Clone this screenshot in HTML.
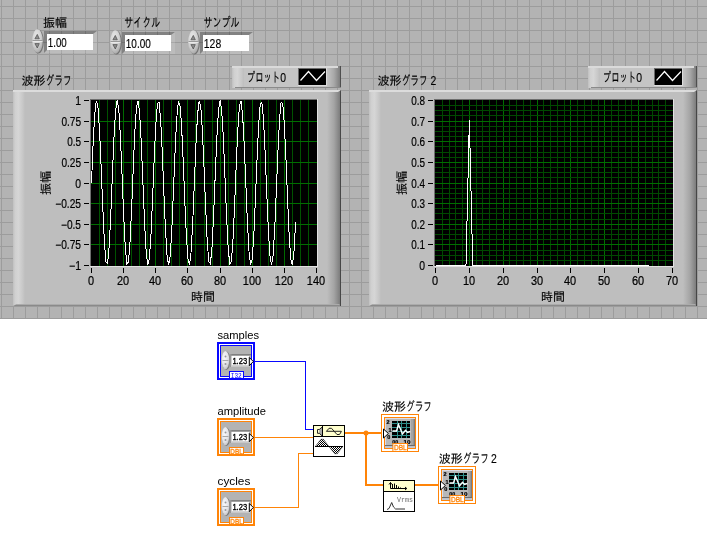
<!DOCTYPE html>
<html lang="ja"><head><meta charset="utf-8"><title>LabVIEW</title>
<style>html,body{margin:0;padding:0;background:#fff;overflow:hidden}svg{display:block;will-change:transform}</style></head>
<body>
<svg width="707" height="534" viewBox="0 0 707 534" font-family="'Liberation Sans','IPAGothic',sans-serif">
<defs>
<pattern id="grid" width="12" height="12" patternUnits="userSpaceOnUse">
<rect width="12" height="12" fill="#b3b3b3"/>
<rect x="1" y="0" width="1" height="12" fill="#9c9c9c"/>
<rect x="0" y="6" width="12" height="1" fill="#9c9c9c"/>
</pattern>
<linearGradient id="frL" x1="0" x2="1" y1="0" y2="0">
<stop offset="0" stop-color="#c0c0c0"/><stop offset="0.18" stop-color="#d0d0d0"/><stop offset="0.45" stop-color="#d6d6d6"/><stop offset="0.8" stop-color="#c8c8c8"/><stop offset="1" stop-color="#bebebe"/>
</linearGradient>
<linearGradient id="frR" x1="0" x2="1" y1="0" y2="0">
<stop offset="0" stop-color="#bebebe"/><stop offset="0.5" stop-color="#a4a4a4"/><stop offset="0.91" stop-color="#7e7e7e"/><stop offset="0.935" stop-color="#4a4a4a"/><stop offset="1" stop-color="#464646"/>
</linearGradient>
<linearGradient id="lgR" x1="0" x2="1" y1="0" y2="0">
<stop offset="0" stop-color="#c4c4c4"/><stop offset="0.5" stop-color="#a8a8a8"/><stop offset="0.9" stop-color="#808080"/><stop offset="0.93" stop-color="#505050"/><stop offset="1" stop-color="#4c4c4c"/>
</linearGradient>
<radialGradient id="sp" cx="0.4" cy="0.3" r="0.8">
<stop offset="0" stop-color="#e8e8e8"/><stop offset="0.55" stop-color="#d0d0d0"/><stop offset="1" stop-color="#9c9c9c"/>
</radialGradient>
<radialGradient id="sp2" cx="0.4" cy="0.35" r="0.8">
<stop offset="0" stop-color="#fafafc"/><stop offset="0.6" stop-color="#e0e0e4"/><stop offset="1" stop-color="#b0b0b0"/>
</radialGradient>
<pattern id="dith" width="2" height="2" patternUnits="userSpaceOnUse">
<rect width="2" height="2" fill="#fff"/><rect x="0" y="0" width="1" height="1" fill="#000"/><rect x="1" y="1" width="1" height="1" fill="#000"/>
</pattern>
</defs>
<rect x="0" y="0" width="707" height="534" fill="#fff"/>
<rect x="0" y="0" width="707" height="319" fill="url(#grid)"/>
<rect x="0" y="318" width="707" height="1" fill="#9c9c9c"/>
<ellipse cx="38.3" cy="41.6" rx="5.5" ry="12" fill="#505050" opacity="0.65"/>
<ellipse cx="37.5" cy="41" rx="5.3" ry="11.8" fill="url(#sp)"/>
<rect x="32.5" y="40" width="10" height="1" fill="#9a9a9a"/>
<rect x="32.5" y="41" width="10" height="1" fill="#eeeeee" opacity="0.8"/>
<path d="M34.9 38.8 L37.3 34.4 L39.3 38.8 Z" fill="#8c8c8c" stroke="#4a4a4a" stroke-width="0.7"/>
<path d="M34.9 43.6 L37.3 48 L39.3 43.6 Z" fill="#8c8c8c" stroke="#4a4a4a" stroke-width="0.7"/>
<path d="M44 31 L97 31 L93 34 L47 34 L47 50 L44 53 Z" fill="#000" opacity="0.27"/>
<path d="M97 31 L97 53 L44 53 L47 50 L93 50 L93 34 Z" fill="#fff" opacity="0.12"/>
<rect x="47" y="34" width="46" height="16" fill="#fff"/>
<text x="43" y="27" font-size="12" fill="#000" stroke="#000" stroke-width="0.15" text-anchor="start" >振幅</text>
<text x="47.8" y="47" font-size="12" stroke="#000" stroke-width="0.15" textLength="19" lengthAdjust="spacingAndGlyphs">1.00</text>
<ellipse cx="116.3" cy="42.6" rx="5.5" ry="12" fill="#505050" opacity="0.65"/>
<ellipse cx="115.5" cy="42" rx="5.3" ry="11.8" fill="url(#sp)"/>
<rect x="110.5" y="41" width="10" height="1" fill="#9a9a9a"/>
<rect x="110.5" y="42" width="10" height="1" fill="#eeeeee" opacity="0.8"/>
<path d="M112.9 39.8 L115.3 35.4 L117.3 39.8 Z" fill="#8c8c8c" stroke="#4a4a4a" stroke-width="0.7"/>
<path d="M112.9 44.6 L115.3 49 L117.3 44.6 Z" fill="#8c8c8c" stroke="#4a4a4a" stroke-width="0.7"/>
<path d="M122 32 L175 32 L171 35 L125 35 L125 51 L122 54 Z" fill="#000" opacity="0.27"/>
<path d="M175 32 L175 54 L122 54 L125 51 L171 51 L171 35 Z" fill="#fff" opacity="0.12"/>
<rect x="125" y="35" width="46" height="16" fill="#fff"/>
<text x="124.2" y="27.3" font-size="13" fill="#000" stroke="#000" stroke-width="0.15" text-anchor="start" textLength="36" lengthAdjust="spacingAndGlyphs" >サイクル</text>
<text x="125.8" y="48" font-size="12" stroke="#000" stroke-width="0.15" textLength="25" lengthAdjust="spacingAndGlyphs">10.00</text>
<ellipse cx="194.3" cy="42.6" rx="5.5" ry="12" fill="#505050" opacity="0.65"/>
<ellipse cx="193.5" cy="42" rx="5.3" ry="11.8" fill="url(#sp)"/>
<rect x="188.5" y="41" width="10" height="1" fill="#9a9a9a"/>
<rect x="188.5" y="42" width="10" height="1" fill="#eeeeee" opacity="0.8"/>
<path d="M190.9 39.8 L193.3 35.4 L195.3 39.8 Z" fill="#8c8c8c" stroke="#4a4a4a" stroke-width="0.7"/>
<path d="M190.9 44.6 L193.3 49 L195.3 44.6 Z" fill="#8c8c8c" stroke="#4a4a4a" stroke-width="0.7"/>
<path d="M200 32 L253 32 L249 35 L203 35 L203 51 L200 54 Z" fill="#000" opacity="0.27"/>
<path d="M253 32 L253 54 L200 54 L203 51 L249 51 L249 35 Z" fill="#fff" opacity="0.12"/>
<rect x="203" y="35" width="46" height="16" fill="#fff"/>
<text x="203.4" y="27.3" font-size="13" fill="#000" stroke="#000" stroke-width="0.15" text-anchor="start" textLength="36" lengthAdjust="spacingAndGlyphs" >サンプル</text>
<text x="203.8" y="48" font-size="12" stroke="#000" stroke-width="0.15" textLength="17.4" lengthAdjust="spacingAndGlyphs">128</text>
<rect x="232" y="66" width="109" height="22" fill="#c4c4c4"/>
<rect x="232" y="66" width="12" height="22" fill="url(#frL)"/>
<rect x="327" y="66" width="14" height="22" fill="url(#lgR)"/>
<rect x="232" y="66" width="106" height="2" fill="#dadada"/>
<rect x="235" y="87" width="106" height="1" fill="#8a8a8a"/>
<text y="82.2" font-size="12" stroke="#000" stroke-width="0.15"><tspan x="246.8" font-size="13" textLength="33.4" lengthAdjust="spacingAndGlyphs">プロット</tspan><tspan x="280.2" textLength="5.8" lengthAdjust="spacingAndGlyphs">0</tspan></text>
<rect x="298" y="68" width="29" height="18" fill="#dcdcdc"/>
<rect x="298" y="68" width="28" height="17" fill="#6a6a6a"/>
<rect x="299" y="69" width="27" height="16" fill="#000"/>
<polyline points="300.5,80.5 308.5,71.5 316.5,80.5 325,71.5" fill="none" stroke="#fff" stroke-width="1.2"/>
<rect x="13" y="90" width="328" height="216" fill="#bebebe"/>
<rect x="13" y="90" width="12" height="216" fill="url(#frL)"/>
<rect x="327" y="90" width="14" height="216" fill="url(#frR)"/>
<path d="M13 90 L341 90 L338 92 L13 92 Z" fill="#dcdcdc"/>
<path d="M16 304 L339 304 L340 305 L15 305 Z" fill="#ababab"/><path d="M15 305 L340 305 L341 306 L13 306 Z" fill="#8a8a8a"/>
<rect x="340" y="92" width="1" height="214" fill="#464646"/>
<text y="85" font-size="12" stroke="#000" stroke-width="0.15"><tspan x="21.6">波形</tspan><tspan x="45.6" font-size="13" textLength="26" lengthAdjust="spacingAndGlyphs">グラフ</tspan></text>
<rect x="90" y="99" width="228" height="168" fill="#e2e2e2"/>
<rect x="90" y="99" width="227" height="167" fill="#6e6e6e"/>
<rect x="91" y="100" width="226" height="166" fill="#000"/>
<g shape-rendering="crispEdges">
<rect x="99" y="100" width="1" height="166" fill="#005200"/>
<rect x="107" y="100" width="1" height="166" fill="#005200"/>
<rect x="115" y="100" width="1" height="166" fill="#005200"/>
<rect x="123" y="100" width="1" height="166" fill="#006a00"/>
<rect x="131" y="100" width="1" height="166" fill="#005200"/>
<rect x="139" y="100" width="1" height="166" fill="#005200"/>
<rect x="147" y="100" width="1" height="166" fill="#005200"/>
<rect x="155" y="100" width="1" height="166" fill="#006a00"/>
<rect x="163" y="100" width="1" height="166" fill="#005200"/>
<rect x="171" y="100" width="1" height="166" fill="#005200"/>
<rect x="179" y="100" width="1" height="166" fill="#005200"/>
<rect x="187" y="100" width="1" height="166" fill="#006a00"/>
<rect x="195" y="100" width="1" height="166" fill="#005200"/>
<rect x="204" y="100" width="1" height="166" fill="#005200"/>
<rect x="212" y="100" width="1" height="166" fill="#005200"/>
<rect x="220" y="100" width="1" height="166" fill="#006a00"/>
<rect x="228" y="100" width="1" height="166" fill="#005200"/>
<rect x="236" y="100" width="1" height="166" fill="#005200"/>
<rect x="244" y="100" width="1" height="166" fill="#005200"/>
<rect x="252" y="100" width="1" height="166" fill="#006a00"/>
<rect x="260" y="100" width="1" height="166" fill="#005200"/>
<rect x="268" y="100" width="1" height="166" fill="#005200"/>
<rect x="276" y="100" width="1" height="166" fill="#005200"/>
<rect x="284" y="100" width="1" height="166" fill="#006a00"/>
<rect x="292" y="100" width="1" height="166" fill="#005200"/>
<rect x="300" y="100" width="1" height="166" fill="#005200"/>
<rect x="308" y="100" width="1" height="166" fill="#005200"/>
<rect x="91" y="121" width="226" height="1" fill="#006e00"/>
<rect x="91" y="141" width="226" height="1" fill="#006e00"/>
<rect x="91" y="162" width="226" height="1" fill="#006e00"/>
<rect x="91" y="183" width="226" height="1" fill="#006e00"/>
<rect x="91" y="203" width="226" height="1" fill="#006e00"/>
<rect x="91" y="224" width="226" height="1" fill="#006e00"/>
<rect x="91" y="244" width="226" height="1" fill="#006e00"/>
</g>
<polyline points="91.50,182.85 93.11,143.96 94.71,114.25 96.32,100.75 97.93,106.63 99.54,130.51 101.14,166.76 102.75,206.80 104.36,241.19 105.96,261.80 107.57,263.76 109.18,246.62 110.79,214.42 112.39,174.76 114.00,137.02 115.61,110.09 117.21,100.35 118.82,110.09 120.43,137.02 122.04,174.76 123.64,214.42 125.25,246.62 126.86,263.76 128.46,261.80 130.07,241.19 131.68,206.80 133.29,166.76 134.89,130.51 136.50,106.63 138.11,100.75 139.71,114.25 141.32,143.96 142.93,182.85 144.54,221.74 146.14,251.45 147.75,264.95 149.36,259.07 150.96,235.19 152.57,198.94 154.18,158.90 155.79,124.51 157.39,103.90 159.00,101.94 160.61,119.08 162.21,151.28 163.82,190.94 165.43,228.68 167.04,255.61 168.64,265.35 170.25,255.61 171.86,228.68 173.46,190.94 175.07,151.28 176.68,119.08 178.29,101.94 179.89,103.90 181.50,124.51 183.11,158.90 184.71,198.94 186.32,235.19 187.93,259.07 189.54,264.95 191.14,251.45 192.75,221.74 194.36,182.85 195.96,143.96 197.57,114.25 199.18,100.75 200.79,106.63 202.39,130.51 204.00,166.76 205.61,206.80 207.21,241.19 208.82,261.80 210.43,263.76 212.04,246.62 213.64,214.42 215.25,174.76 216.86,137.02 218.46,110.09 220.07,100.35 221.68,110.09 223.29,137.02 224.89,174.76 226.50,214.42 228.11,246.62 229.71,263.76 231.32,261.80 232.93,241.19 234.54,206.80 236.14,166.76 237.75,130.51 239.36,106.63 240.96,100.75 242.57,114.25 244.18,143.96 245.79,182.85 247.39,221.74 249.00,251.45 250.61,264.95 252.21,259.07 253.82,235.19 255.43,198.94 257.04,158.90 258.64,124.51 260.25,103.90 261.86,101.94 263.46,119.08 265.07,151.28 266.68,190.94 268.29,228.68 269.89,255.61 271.50,265.35 273.11,255.61 274.71,228.68 276.32,190.94 277.93,151.28 279.54,119.08 281.14,101.94 282.75,103.90 284.36,124.51 285.96,158.90 287.57,198.94 289.18,235.19 290.79,259.07 292.39,264.95 294.00,251.45 295.61,221.74" fill="none" stroke="#fff" stroke-width="1" shape-rendering="crispEdges"/>
<rect x="84" y="100" width="5" height="1" fill="#000"/>
<text x="81" y="104.5" font-size="12" stroke="#000" stroke-width="0.2" text-anchor="end" textLength="5.8" lengthAdjust="spacingAndGlyphs">1</text>
<rect x="84" y="121" width="5" height="1" fill="#000"/>
<text x="81" y="125.5" font-size="12" stroke="#000" stroke-width="0.2" text-anchor="end" textLength="19.6" lengthAdjust="spacingAndGlyphs">0.75</text>
<rect x="84" y="141" width="5" height="1" fill="#000"/>
<text x="81" y="145.5" font-size="12" stroke="#000" stroke-width="0.2" text-anchor="end" textLength="13.8" lengthAdjust="spacingAndGlyphs">0.5</text>
<rect x="84" y="162" width="5" height="1" fill="#000"/>
<text x="81" y="166.5" font-size="12" stroke="#000" stroke-width="0.2" text-anchor="end" textLength="19.6" lengthAdjust="spacingAndGlyphs">0.25</text>
<rect x="84" y="183" width="5" height="1" fill="#000"/>
<text x="81" y="187.5" font-size="12" stroke="#000" stroke-width="0.2" text-anchor="end" textLength="5.8" lengthAdjust="spacingAndGlyphs">0</text>
<rect x="84" y="203" width="5" height="1" fill="#000"/>
<text x="81" y="207.5" font-size="12" stroke="#000" stroke-width="0.2" text-anchor="end" textLength="25.8" lengthAdjust="spacingAndGlyphs">−0.25</text>
<rect x="84" y="224" width="5" height="1" fill="#000"/>
<text x="81" y="228.5" font-size="12" stroke="#000" stroke-width="0.2" text-anchor="end" textLength="20.0" lengthAdjust="spacingAndGlyphs">−0.5</text>
<rect x="84" y="244" width="5" height="1" fill="#000"/>
<text x="81" y="248.5" font-size="12" stroke="#000" stroke-width="0.2" text-anchor="end" textLength="25.8" lengthAdjust="spacingAndGlyphs">−0.75</text>
<rect x="84" y="265" width="5" height="1" fill="#000"/>
<text x="81" y="269.5" font-size="12" stroke="#000" stroke-width="0.2" text-anchor="end" textLength="12.0" lengthAdjust="spacingAndGlyphs">−1</text>
<rect x="91" y="268" width="1" height="5" fill="#000"/>
<text x="91" y="285" font-size="12" stroke="#000" stroke-width="0.2" text-anchor="middle" textLength="6.1" lengthAdjust="spacingAndGlyphs">0</text>
<rect x="123" y="268" width="1" height="5" fill="#000"/>
<text x="123" y="285" font-size="12" stroke="#000" stroke-width="0.2" text-anchor="middle" textLength="12.2" lengthAdjust="spacingAndGlyphs">20</text>
<rect x="155" y="268" width="1" height="5" fill="#000"/>
<text x="155" y="285" font-size="12" stroke="#000" stroke-width="0.2" text-anchor="middle" textLength="12.2" lengthAdjust="spacingAndGlyphs">40</text>
<rect x="187" y="268" width="1" height="5" fill="#000"/>
<text x="187" y="285" font-size="12" stroke="#000" stroke-width="0.2" text-anchor="middle" textLength="12.2" lengthAdjust="spacingAndGlyphs">60</text>
<rect x="220" y="268" width="1" height="5" fill="#000"/>
<text x="220" y="285" font-size="12" stroke="#000" stroke-width="0.2" text-anchor="middle" textLength="12.2" lengthAdjust="spacingAndGlyphs">80</text>
<rect x="252" y="268" width="1" height="5" fill="#000"/>
<text x="252" y="285" font-size="12" stroke="#000" stroke-width="0.2" text-anchor="middle" textLength="18.3" lengthAdjust="spacingAndGlyphs">100</text>
<rect x="284" y="268" width="1" height="5" fill="#000"/>
<text x="284" y="285" font-size="12" stroke="#000" stroke-width="0.2" text-anchor="middle" textLength="18.3" lengthAdjust="spacingAndGlyphs">120</text>
<rect x="316" y="268" width="1" height="5" fill="#000"/>
<text x="316" y="285" font-size="12" stroke="#000" stroke-width="0.2" text-anchor="middle" textLength="18.3" lengthAdjust="spacingAndGlyphs">140</text>
<text x="191" y="301" font-size="12" fill="#000" stroke="#000" stroke-width="0.15" text-anchor="start" >時間</text>
<text transform="translate(50,195) rotate(-90)" font-size="12" stroke="#000" stroke-width="0.15">振幅</text>
<rect x="588" y="66" width="109" height="22" fill="#c4c4c4"/>
<rect x="588" y="66" width="12" height="22" fill="url(#frL)"/>
<rect x="683" y="66" width="14" height="22" fill="url(#lgR)"/>
<rect x="588" y="66" width="106" height="2" fill="#dadada"/>
<rect x="591" y="87" width="106" height="1" fill="#8a8a8a"/>
<text y="82.2" font-size="12" stroke="#000" stroke-width="0.15"><tspan x="602.8" font-size="13" textLength="33.4" lengthAdjust="spacingAndGlyphs">プロット</tspan><tspan x="636.2" textLength="5.8" lengthAdjust="spacingAndGlyphs">0</tspan></text>
<rect x="654" y="68" width="29" height="18" fill="#dcdcdc"/>
<rect x="654" y="68" width="28" height="17" fill="#6a6a6a"/>
<rect x="655" y="69" width="27" height="16" fill="#000"/>
<polyline points="656.5,80.5 664.5,71.5 672.5,80.5 681,71.5" fill="none" stroke="#fff" stroke-width="1.2"/>
<rect x="369" y="90" width="328" height="216" fill="#bebebe"/>
<rect x="369" y="90" width="12" height="216" fill="url(#frL)"/>
<rect x="683" y="90" width="14" height="216" fill="url(#frR)"/>
<path d="M369 90 L697 90 L694 92 L369 92 Z" fill="#dcdcdc"/>
<path d="M372 304 L695 304 L696 305 L371 305 Z" fill="#ababab"/><path d="M371 305 L696 305 L697 306 L369 306 Z" fill="#8a8a8a"/>
<rect x="696" y="92" width="1" height="214" fill="#464646"/>
<text y="85" font-size="12" stroke="#000" stroke-width="0.15"><tspan x="377.6">波形</tspan><tspan x="401.6" font-size="13" textLength="26" lengthAdjust="spacingAndGlyphs">グラフ</tspan><tspan> </tspan><tspan x="430.6" textLength="5.8" lengthAdjust="spacingAndGlyphs">2</tspan></text>
<rect x="434" y="99" width="240" height="168" fill="#e2e2e2"/>
<rect x="434" y="99" width="239" height="167" fill="#6e6e6e"/>
<rect x="435" y="100" width="238" height="166" fill="#000"/>
<g shape-rendering="crispEdges">
<rect x="442" y="100" width="1" height="166" fill="#004a00"/>
<rect x="449" y="100" width="1" height="166" fill="#004a00"/>
<rect x="455" y="100" width="1" height="166" fill="#004a00"/>
<rect x="462" y="100" width="1" height="166" fill="#004a00"/>
<rect x="469" y="100" width="1" height="166" fill="#006e00"/>
<rect x="476" y="100" width="1" height="166" fill="#004a00"/>
<rect x="482" y="100" width="1" height="166" fill="#004a00"/>
<rect x="489" y="100" width="1" height="166" fill="#004a00"/>
<rect x="496" y="100" width="1" height="166" fill="#004a00"/>
<rect x="503" y="100" width="1" height="166" fill="#006e00"/>
<rect x="509" y="100" width="1" height="166" fill="#004a00"/>
<rect x="516" y="100" width="1" height="166" fill="#004a00"/>
<rect x="523" y="100" width="1" height="166" fill="#004a00"/>
<rect x="530" y="100" width="1" height="166" fill="#004a00"/>
<rect x="537" y="100" width="1" height="166" fill="#006e00"/>
<rect x="543" y="100" width="1" height="166" fill="#004a00"/>
<rect x="550" y="100" width="1" height="166" fill="#004a00"/>
<rect x="557" y="100" width="1" height="166" fill="#004a00"/>
<rect x="564" y="100" width="1" height="166" fill="#004a00"/>
<rect x="570" y="100" width="1" height="166" fill="#006e00"/>
<rect x="577" y="100" width="1" height="166" fill="#004a00"/>
<rect x="584" y="100" width="1" height="166" fill="#004a00"/>
<rect x="591" y="100" width="1" height="166" fill="#004a00"/>
<rect x="598" y="100" width="1" height="166" fill="#004a00"/>
<rect x="604" y="100" width="1" height="166" fill="#006e00"/>
<rect x="611" y="100" width="1" height="166" fill="#004a00"/>
<rect x="618" y="100" width="1" height="166" fill="#004a00"/>
<rect x="625" y="100" width="1" height="166" fill="#004a00"/>
<rect x="631" y="100" width="1" height="166" fill="#004a00"/>
<rect x="638" y="100" width="1" height="166" fill="#006e00"/>
<rect x="645" y="100" width="1" height="166" fill="#004a00"/>
<rect x="652" y="100" width="1" height="166" fill="#004a00"/>
<rect x="658" y="100" width="1" height="166" fill="#004a00"/>
<rect x="665" y="100" width="1" height="166" fill="#004a00"/>
<rect x="435" y="105" width="238" height="1" fill="#004a00"/>
<rect x="435" y="110" width="238" height="1" fill="#004a00"/>
<rect x="435" y="115" width="238" height="1" fill="#004a00"/>
<rect x="435" y="121" width="238" height="1" fill="#006e00"/>
<rect x="435" y="126" width="238" height="1" fill="#004a00"/>
<rect x="435" y="131" width="238" height="1" fill="#004a00"/>
<rect x="435" y="136" width="238" height="1" fill="#004a00"/>
<rect x="435" y="141" width="238" height="1" fill="#006e00"/>
<rect x="435" y="146" width="238" height="1" fill="#004a00"/>
<rect x="435" y="152" width="238" height="1" fill="#004a00"/>
<rect x="435" y="157" width="238" height="1" fill="#004a00"/>
<rect x="435" y="162" width="238" height="1" fill="#006e00"/>
<rect x="435" y="167" width="238" height="1" fill="#004a00"/>
<rect x="435" y="172" width="238" height="1" fill="#004a00"/>
<rect x="435" y="177" width="238" height="1" fill="#004a00"/>
<rect x="435" y="183" width="238" height="1" fill="#006e00"/>
<rect x="435" y="188" width="238" height="1" fill="#004a00"/>
<rect x="435" y="193" width="238" height="1" fill="#004a00"/>
<rect x="435" y="198" width="238" height="1" fill="#004a00"/>
<rect x="435" y="203" width="238" height="1" fill="#006e00"/>
<rect x="435" y="208" width="238" height="1" fill="#004a00"/>
<rect x="435" y="213" width="238" height="1" fill="#004a00"/>
<rect x="435" y="219" width="238" height="1" fill="#004a00"/>
<rect x="435" y="224" width="238" height="1" fill="#006e00"/>
<rect x="435" y="229" width="238" height="1" fill="#004a00"/>
<rect x="435" y="234" width="238" height="1" fill="#004a00"/>
<rect x="435" y="239" width="238" height="1" fill="#004a00"/>
<rect x="435" y="244" width="238" height="1" fill="#006e00"/>
<rect x="435" y="250" width="238" height="1" fill="#004a00"/>
<rect x="435" y="255" width="238" height="1" fill="#004a00"/>
<rect x="435" y="260" width="238" height="1" fill="#004a00"/>
</g>
<polyline points="435.50,265.50 438.89,265.50 442.27,265.50 445.66,265.50 449.04,265.50 452.43,265.50 455.81,265.50 459.20,265.50 462.59,265.50 465.97,265.50 469.36,119.66 472.74,265.50 476.13,265.50 479.51,265.50 482.90,265.50 486.29,265.50 489.67,265.50 493.06,265.50 496.44,265.50 499.83,265.50 503.21,265.50 506.60,265.50 509.99,265.50 513.37,265.50 516.76,265.50 520.14,265.50 523.53,265.50 526.91,265.50 530.30,265.50 533.69,265.50 537.07,265.50 540.46,265.50 543.84,265.50 547.23,265.50 550.61,265.50 554.00,265.50 557.39,265.50 560.77,265.50 564.16,265.50 567.54,265.50 570.93,265.50 574.31,265.50 577.70,265.50 581.09,265.50 584.47,265.50 587.86,265.50 591.24,265.50 594.63,265.50 598.01,265.50 601.40,265.50 604.79,265.50 608.17,265.50 611.56,265.50 614.94,265.50 618.33,265.50 621.71,265.50 625.10,265.50 628.49,265.50 631.87,265.50 635.26,265.50 638.64,265.50 642.03,265.50 645.41,265.50 648.80,265.50" fill="none" stroke="#fff" stroke-width="1" shape-rendering="crispEdges"/>
<rect x="428" y="100" width="5" height="1" fill="#000"/>
<text x="425" y="104.5" font-size="12" stroke="#000" stroke-width="0.2" text-anchor="end" textLength="13.8" lengthAdjust="spacingAndGlyphs">0.8</text>
<rect x="428" y="121" width="5" height="1" fill="#000"/>
<text x="425" y="125.5" font-size="12" stroke="#000" stroke-width="0.2" text-anchor="end" textLength="13.8" lengthAdjust="spacingAndGlyphs">0.7</text>
<rect x="428" y="141" width="5" height="1" fill="#000"/>
<text x="425" y="145.5" font-size="12" stroke="#000" stroke-width="0.2" text-anchor="end" textLength="13.8" lengthAdjust="spacingAndGlyphs">0.6</text>
<rect x="428" y="162" width="5" height="1" fill="#000"/>
<text x="425" y="166.5" font-size="12" stroke="#000" stroke-width="0.2" text-anchor="end" textLength="13.8" lengthAdjust="spacingAndGlyphs">0.5</text>
<rect x="428" y="183" width="5" height="1" fill="#000"/>
<text x="425" y="187.5" font-size="12" stroke="#000" stroke-width="0.2" text-anchor="end" textLength="13.8" lengthAdjust="spacingAndGlyphs">0.4</text>
<rect x="428" y="203" width="5" height="1" fill="#000"/>
<text x="425" y="207.5" font-size="12" stroke="#000" stroke-width="0.2" text-anchor="end" textLength="13.8" lengthAdjust="spacingAndGlyphs">0.3</text>
<rect x="428" y="224" width="5" height="1" fill="#000"/>
<text x="425" y="228.5" font-size="12" stroke="#000" stroke-width="0.2" text-anchor="end" textLength="13.8" lengthAdjust="spacingAndGlyphs">0.2</text>
<rect x="428" y="244" width="5" height="1" fill="#000"/>
<text x="425" y="248.5" font-size="12" stroke="#000" stroke-width="0.2" text-anchor="end" textLength="13.8" lengthAdjust="spacingAndGlyphs">0.1</text>
<rect x="428" y="265" width="5" height="1" fill="#000"/>
<text x="425" y="269.5" font-size="12" stroke="#000" stroke-width="0.2" text-anchor="end" textLength="5.8" lengthAdjust="spacingAndGlyphs">0</text>
<rect x="435" y="268" width="1" height="5" fill="#000"/>
<text x="435" y="285" font-size="12" stroke="#000" stroke-width="0.2" text-anchor="middle" textLength="6.1" lengthAdjust="spacingAndGlyphs">0</text>
<rect x="469" y="268" width="1" height="5" fill="#000"/>
<text x="469" y="285" font-size="12" stroke="#000" stroke-width="0.2" text-anchor="middle" textLength="12.2" lengthAdjust="spacingAndGlyphs">10</text>
<rect x="503" y="268" width="1" height="5" fill="#000"/>
<text x="503" y="285" font-size="12" stroke="#000" stroke-width="0.2" text-anchor="middle" textLength="12.2" lengthAdjust="spacingAndGlyphs">20</text>
<rect x="537" y="268" width="1" height="5" fill="#000"/>
<text x="537" y="285" font-size="12" stroke="#000" stroke-width="0.2" text-anchor="middle" textLength="12.2" lengthAdjust="spacingAndGlyphs">30</text>
<rect x="570" y="268" width="1" height="5" fill="#000"/>
<text x="570" y="285" font-size="12" stroke="#000" stroke-width="0.2" text-anchor="middle" textLength="12.2" lengthAdjust="spacingAndGlyphs">40</text>
<rect x="604" y="268" width="1" height="5" fill="#000"/>
<text x="604" y="285" font-size="12" stroke="#000" stroke-width="0.2" text-anchor="middle" textLength="12.2" lengthAdjust="spacingAndGlyphs">50</text>
<rect x="638" y="268" width="1" height="5" fill="#000"/>
<text x="638" y="285" font-size="12" stroke="#000" stroke-width="0.2" text-anchor="middle" textLength="12.2" lengthAdjust="spacingAndGlyphs">60</text>
<rect x="672" y="268" width="1" height="5" fill="#000"/>
<text x="672" y="285" font-size="12" stroke="#000" stroke-width="0.2" text-anchor="middle" textLength="12.2" lengthAdjust="spacingAndGlyphs">70</text>
<text x="541" y="301" font-size="12" fill="#000" stroke="#000" stroke-width="0.15" text-anchor="start" >時間</text>
<text transform="translate(406,195) rotate(-90)" font-size="12" stroke="#000" stroke-width="0.15">振幅</text>
<g shape-rendering="crispEdges">
<rect x="254" y="361" width="52" height="1" fill="#0808ff"/>
<rect x="305" y="361" width="1" height="69" fill="#0808ff"/>
<rect x="305" y="429" width="9" height="1" fill="#0808ff"/>
<rect x="254" y="437" width="60" height="1" fill="#ff8408"/>
<rect x="254" y="507" width="45" height="1" fill="#ff8408"/>
<rect x="298" y="453" width="1" height="55" fill="#ff8408"/>
<rect x="298" y="453" width="16" height="1" fill="#ff8408"/>
<rect x="345" y="432" width="37" height="2" fill="#ff8408"/>
<rect x="365" y="432" width="2" height="54" fill="#ff8408"/>
<rect x="365" y="484" width="19" height="2" fill="#ff8408"/>
<rect x="415" y="484" width="24" height="2" fill="#ff8408"/>
</g>
<circle cx="366" cy="433" r="2.5" fill="#ff8408"/>
<text x="217.5" y="339" font-size="11" font-family="'Liberation Sans',sans-serif" textLength="41.6" lengthAdjust="spacingAndGlyphs">samples</text>
<text x="217.5" y="415" font-size="11" font-family="'Liberation Sans',sans-serif" textLength="48.4" lengthAdjust="spacingAndGlyphs">amplitude</text>
<text x="217.5" y="485" font-size="11" font-family="'Liberation Sans',sans-serif" textLength="32.8" lengthAdjust="spacingAndGlyphs">cycles</text>
<rect x="217" y="342" width="38" height="38" fill="#0808ff"/>
<rect x="219" y="344" width="34" height="34" fill="#fff"/>
<rect x="220" y="345" width="32" height="32" fill="#0808ff"/>
<rect x="221" y="346" width="30" height="30" fill="#b3b3b3"/>
<ellipse cx="226.3" cy="360.7" rx="4.1" ry="9.4" fill="#7a7a7a"/>
<ellipse cx="225.5" cy="360.1" rx="3.8" ry="9.1" fill="url(#sp2)"/>
<rect x="222.5" y="360" width="6" height="1" fill="#a8a8a8"/>
<circle cx="225.5" cy="356.5" r="1" fill="#999"/>
<circle cx="225.5" cy="364" r="1" fill="#999"/>
<rect x="230" y="354" width="21" height="1" fill="#808080"/>
<rect x="230" y="355" width="21" height="1" fill="#a2a2a2"/>
<rect x="229.5" y="354" width="2" height="13" fill="#969696"/>
<rect x="231" y="365" width="19" height="2" fill="#c8c8c8"/>
<rect x="231.5" y="356" width="17.5" height="9.2" fill="#fff"/>
<text x="232.4" y="363.9" font-size="9.6" textLength="14.8" lengthAdjust="spacingAndGlyphs" stroke="#000" stroke-width="0.35">1.23</text>
<path d="M249.3 357.5 L253.3 361.5 L249.3 365.7 Z" fill="#fff" stroke="#000" stroke-width="1"/>
<rect x="229" y="371" width="15" height="7" fill="#0808ff"/>
<rect x="230" y="372" width="13" height="6" fill="#fff"/>
<text x="236.3" y="378" font-size="7.5" fill="#0808ff" text-anchor="middle" textLength="11" lengthAdjust="spacingAndGlyphs" font-family="'Liberation Mono',monospace">I32</text>
<rect x="217" y="418" width="38" height="38" fill="#ff8408"/>
<rect x="219" y="420" width="34" height="34" fill="#fff"/>
<rect x="220" y="421" width="32" height="32" fill="#ff8408"/>
<rect x="221" y="422" width="30" height="30" fill="#b3b3b3"/>
<ellipse cx="226.3" cy="436.7" rx="4.1" ry="9.4" fill="#7a7a7a"/>
<ellipse cx="225.5" cy="436.1" rx="3.8" ry="9.1" fill="url(#sp2)"/>
<rect x="222.5" y="436" width="6" height="1" fill="#a8a8a8"/>
<circle cx="225.5" cy="432.5" r="1" fill="#999"/>
<circle cx="225.5" cy="440" r="1" fill="#999"/>
<rect x="230" y="430" width="21" height="1" fill="#808080"/>
<rect x="230" y="431" width="21" height="1" fill="#a2a2a2"/>
<rect x="229.5" y="430" width="2" height="13" fill="#969696"/>
<rect x="231" y="441" width="19" height="2" fill="#c8c8c8"/>
<rect x="231.5" y="432" width="17.5" height="9.2" fill="#fff"/>
<text x="232.4" y="439.9" font-size="9.6" textLength="14.8" lengthAdjust="spacingAndGlyphs" stroke="#000" stroke-width="0.35">1.23</text>
<path d="M249.3 433.5 L253.3 437.5 L249.3 441.7 Z" fill="#fff" stroke="#000" stroke-width="1"/>
<rect x="229" y="447" width="15" height="7" fill="#ff8408"/>
<rect x="230" y="448" width="13" height="6" fill="#fff"/>
<text x="236.5" y="453.9" font-size="7.6" fill="#ff8408" stroke="#ff8408" stroke-width="0.3" text-anchor="middle" textLength="12.4" lengthAdjust="spacingAndGlyphs">DBL</text>
<rect x="217" y="488" width="38" height="38" fill="#ff8408"/>
<rect x="219" y="490" width="34" height="34" fill="#fff"/>
<rect x="220" y="491" width="32" height="32" fill="#ff8408"/>
<rect x="221" y="492" width="30" height="30" fill="#b3b3b3"/>
<ellipse cx="226.3" cy="506.7" rx="4.1" ry="9.4" fill="#7a7a7a"/>
<ellipse cx="225.5" cy="506.1" rx="3.8" ry="9.1" fill="url(#sp2)"/>
<rect x="222.5" y="506" width="6" height="1" fill="#a8a8a8"/>
<circle cx="225.5" cy="502.5" r="1" fill="#999"/>
<circle cx="225.5" cy="510" r="1" fill="#999"/>
<rect x="230" y="500" width="21" height="1" fill="#808080"/>
<rect x="230" y="501" width="21" height="1" fill="#a2a2a2"/>
<rect x="229.5" y="500" width="2" height="13" fill="#969696"/>
<rect x="231" y="511" width="19" height="2" fill="#c8c8c8"/>
<rect x="231.5" y="502" width="17.5" height="9.2" fill="#fff"/>
<text x="232.4" y="509.9" font-size="9.6" textLength="14.8" lengthAdjust="spacingAndGlyphs" stroke="#000" stroke-width="0.35">1.23</text>
<path d="M249.3 503.5 L253.3 507.5 L249.3 511.7 Z" fill="#fff" stroke="#000" stroke-width="1"/>
<rect x="229" y="517" width="15" height="7" fill="#ff8408"/>
<rect x="230" y="518" width="13" height="6" fill="#fff"/>
<text x="236.5" y="523.9" font-size="7.6" fill="#ff8408" stroke="#ff8408" stroke-width="0.3" text-anchor="middle" textLength="12.4" lengthAdjust="spacingAndGlyphs">DBL</text>
<g>
<rect x="313" y="425" width="32" height="32" fill="#000"/>
<rect x="314" y="426" width="30" height="10" fill="#ffffce"/>
<rect x="314" y="437" width="30" height="19" fill="#fff"/>
<rect x="322" y="426" width="1" height="10" fill="#000"/>
<path d="M319.2 429.5 L322 427 L322 436 L319.2 433.3 Z" fill="#a8a8a8"/>
<path d="M319.3 429.5 L317.5 429.5 L317.5 433.3 L319.3 433.3 M319.3 429.5 L322 427.2 M319.3 433.3 L322 435.8" fill="none" stroke="#222" stroke-width="1"/>
<path d="M326.3 431.3 L341.3 431.3 M326.5 431.3 L329 428.3 L331.5 428.3 L337 434.5 L339.5 434.5 L341.5 431.3" fill="none" stroke="#222" stroke-width="1"/>
<path d="M315.4 446.5 L321 439 L323.3 439 L329 446.5 L334.7 454 L337.2 454 L342.8 446.5 Z" fill="url(#dith)"/>
<path d="M315.4 446.5 L321 439.3 L323.3 439.3 L329 446.5 L334.7 453.7 L337.2 453.7 L342.8 446.5" fill="none" stroke="#333" stroke-width="0.6"/>
<rect x="315" y="446" width="28" height="1" fill="#000"/>
</g>
<g>
<rect x="383" y="480" width="32" height="32" fill="#000"/>
<rect x="384" y="481" width="30" height="10" fill="#ffffce"/>
<rect x="384" y="492" width="30" height="19" fill="#fff"/>
<path d="M390.5 482.5 L390.5 488.5 L406.5 488.5 M389 484.5 L390.5 482.5 L392 484.5 M405 487 L406.8 488.5 L405 490 M392.5 488 L392.5 484 M394.5 488 L394.5 483.5 M396.5 488 L396.5 485 M398.5 488 L398.5 486.5 M400.5 488 L400.5 487.5" fill="none" stroke="#000" stroke-width="1"/>
<text x="397" y="501.8" font-size="7" fill="#6a6a6a" font-family="'Liberation Mono',monospace" textLength="16" lengthAdjust="spacingAndGlyphs">Vrms</text>
<polyline points="387,509.5 389,508.5 391.7,502.5 393.5,507 395.6,509 405,509" fill="none" stroke="#333" stroke-width="1"/>
</g>
<text y="411" font-size="12" stroke="#000" stroke-width="0.15"><tspan x="382">波形</tspan><tspan x="406" font-size="13" textLength="26" lengthAdjust="spacingAndGlyphs">グラフ</tspan></text>
<rect x="381" y="414" width="38" height="38" fill="#ff8408"/>
<rect x="382" y="415" width="36" height="36" fill="#fff"/>
<rect x="384" y="417" width="32" height="32" fill="#ff8408"/>
<rect x="385" y="418" width="30" height="30" fill="#b8b8b8"/>
<rect x="385" y="418" width="30" height="1" fill="#dcdce4"/>
<rect x="385" y="418" width="1" height="27" fill="#dcdce4"/>
<rect x="411" y="419" width="2.5" height="26" fill="#a4a4a4"/>
<rect x="413.5" y="419" width="1.5" height="27" fill="#7c7c7c"/>
<rect x="385" y="445" width="30" height="1.2" fill="#6c6c6c"/>
<rect x="385" y="446.2" width="30" height="1.8" fill="#c4c8d0"/>
<rect x="392" y="421" width="18" height="17" fill="#000"/>
<rect x="397" y="421" width="1" height="17" fill="#2f8f8a"/>
<rect x="401" y="421" width="1" height="17" fill="#2f8f8a"/>
<rect x="406" y="421" width="1" height="17" fill="#2f8f8a"/>
<rect x="392" y="423" width="18" height="1" fill="#2f8f8a"/>
<rect x="392" y="427" width="18" height="1" fill="#2f8f8a"/>
<rect x="392" y="431" width="18" height="1" fill="#2f8f8a"/>
<rect x="392" y="435" width="18" height="1" fill="#2f8f8a"/>
<polyline points="392.5,431 396.5,431 398.5,424.5 402.5,434 405.5,430.3 407.5,432.5 410.3,431.5" fill="none" stroke="#fff" stroke-width="1.4"/>
<text x="386.5" y="423.6" font-size="5.5" font-weight="bold" stroke="#000" stroke-width="0.2">2</text>
<text x="388.6" y="432" font-size="5.5" font-weight="bold" stroke="#000" stroke-width="0.2">1</text>
<text x="387.3" y="439.2" font-size="5.5" font-weight="bold" stroke="#000" stroke-width="0.2">0</text>
<text x="392.2" y="443.7" font-size="5.5" font-weight="bold" stroke="#000" stroke-width="0.2" textLength="6" lengthAdjust="spacingAndGlyphs">00</text>
<text x="403.5" y="443.7" font-size="5.5" font-weight="bold" stroke="#000" stroke-width="0.2" textLength="7" lengthAdjust="spacingAndGlyphs">10</text>
<path d="M383.5 429 L388.4 433.5 L383.5 438 Z" fill="#fff" stroke="#000" stroke-width="1"/>
<rect x="392.4" y="443" width="15.6" height="8" fill="#ff8408"/>
<rect x="393.4" y="444" width="13.6" height="7" fill="#fff"/>
<text x="400.3" y="449.8" font-size="7.6" fill="#ff8408" stroke="#ff8408" stroke-width="0.3" text-anchor="middle" textLength="12.8" lengthAdjust="spacingAndGlyphs">DBL</text>
<text y="463" font-size="12" stroke="#000" stroke-width="0.15"><tspan x="438.8">波形</tspan><tspan x="462.8" font-size="13" textLength="26" lengthAdjust="spacingAndGlyphs">グラフ</tspan><tspan> </tspan><tspan x="491" textLength="5.8" lengthAdjust="spacingAndGlyphs">2</tspan></text>
<rect x="438" y="466" width="38" height="38" fill="#ff8408"/>
<rect x="439" y="467" width="36" height="36" fill="#fff"/>
<rect x="441" y="469" width="32" height="32" fill="#ff8408"/>
<rect x="442" y="470" width="30" height="30" fill="#b8b8b8"/>
<rect x="442" y="470" width="30" height="1" fill="#dcdce4"/>
<rect x="442" y="470" width="1" height="27" fill="#dcdce4"/>
<rect x="468" y="471" width="2.5" height="26" fill="#a4a4a4"/>
<rect x="470.5" y="471" width="1.5" height="27" fill="#7c7c7c"/>
<rect x="442" y="497" width="30" height="1.2" fill="#6c6c6c"/>
<rect x="442" y="498.2" width="30" height="1.8" fill="#c4c8d0"/>
<rect x="449" y="473" width="18" height="17" fill="#000"/>
<rect x="454" y="473" width="1" height="17" fill="#2f8f8a"/>
<rect x="458" y="473" width="1" height="17" fill="#2f8f8a"/>
<rect x="463" y="473" width="1" height="17" fill="#2f8f8a"/>
<rect x="449" y="475" width="18" height="1" fill="#2f8f8a"/>
<rect x="449" y="479" width="18" height="1" fill="#2f8f8a"/>
<rect x="449" y="483" width="18" height="1" fill="#2f8f8a"/>
<rect x="449" y="487" width="18" height="1" fill="#2f8f8a"/>
<polyline points="449.5,483 453.5,483 455.5,476.5 459.5,486 462.5,482.3 464.5,484.5 467.3,483.5" fill="none" stroke="#fff" stroke-width="1.4"/>
<text x="443.5" y="475.6" font-size="5.5" font-weight="bold" stroke="#000" stroke-width="0.2">2</text>
<text x="445.6" y="484" font-size="5.5" font-weight="bold" stroke="#000" stroke-width="0.2">1</text>
<text x="444.3" y="491.2" font-size="5.5" font-weight="bold" stroke="#000" stroke-width="0.2">0</text>
<text x="449.2" y="495.7" font-size="5.5" font-weight="bold" stroke="#000" stroke-width="0.2" textLength="6" lengthAdjust="spacingAndGlyphs">00</text>
<text x="460.5" y="495.7" font-size="5.5" font-weight="bold" stroke="#000" stroke-width="0.2" textLength="7" lengthAdjust="spacingAndGlyphs">10</text>
<path d="M440.5 481 L445.4 485.5 L440.5 490 Z" fill="#fff" stroke="#000" stroke-width="1"/>
<rect x="449.4" y="495" width="15.6" height="8" fill="#ff8408"/>
<rect x="450.4" y="496" width="13.6" height="7" fill="#fff"/>
<text x="457.3" y="501.8" font-size="7.6" fill="#ff8408" stroke="#ff8408" stroke-width="0.3" text-anchor="middle" textLength="12.8" lengthAdjust="spacingAndGlyphs">DBL</text>
</svg>
</body></html>
